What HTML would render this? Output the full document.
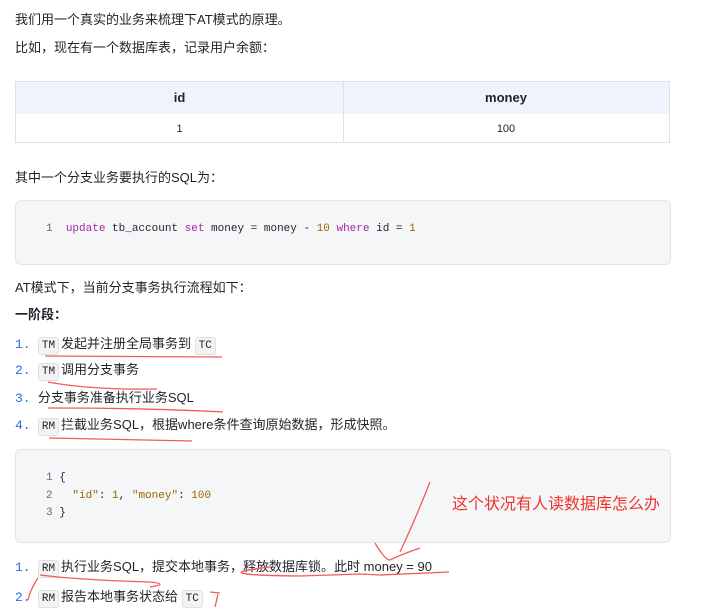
<!DOCTYPE html><html><head><meta charset="utf-8"><style>
body{margin:0;width:725px;height:607px;overflow:hidden;background:#fff;font-family:"Liberation Sans","Noto Sans CJK SC",sans-serif;font-size:13px;color:#1f2329;position:relative}
.a{position:absolute;white-space:nowrap;line-height:18px}
.tb{position:absolute;left:15px;top:81px;width:655px;height:62px;border:1px solid #dee0e3;box-sizing:border-box}
.code{position:absolute;left:15px;width:656px;background:#f5f6f7;border:1px solid #e4e5e7;border-radius:6px;box-sizing:border-box}
.m{font-family:"Liberation Mono","DejaVu Sans Mono",monospace;font-size:11px}
.k{color:#a626a4}.n{color:#986801}.s{color:#986801}
.num{color:#2f6be6;font-family:"Liberation Mono",monospace}
.t{display:inline-block;border:1px solid #dee0e3;background:#f2f3f5;border-radius:3px;padding:0 3px;font-family:"Liberation Mono",monospace;font-size:11px;line-height:16px;margin-right:2px}
</style></head><body>
<div class="a" style="left:15px;top:11px">我们用一个真实的业务来梳理下AT模式的原理。</div>
<div class="a" style="left:15px;top:39px">比如，现在有一个数据库表，记录用户余额：</div>
<div class="tb">
<div style="position:absolute;left:0;top:0;width:653px;height:32px;background:#eff3fd"></div>
<div style="position:absolute;left:327px;top:0;width:1px;height:60px;background:#dee0e3"></div>
<div class="a" style="left:0;width:327px;text-align:center;top:7px;font-weight:bold">id</div>
<div class="a" style="left:327px;width:326px;text-align:center;top:7px;font-weight:bold">money</div>
<div class="a" style="left:0;width:327px;text-align:center;top:38px;font-size:11px">1</div>
<div class="a" style="left:327px;width:326px;text-align:center;top:38px;font-size:11px">100</div>
</div>
<div class="a" style="left:15px;top:169px">其中一个分支业务要执行的SQL为：</div>
<div class="code" style="top:200px;height:65px">
<div class="a m" style="left:30px;top:19px"><span style="color:#646a73">1</span>&nbsp;&nbsp;<span class="k">update</span> tb_account <span class="k">set</span> money = money - <span class="n">10</span> <span class="k">where</span> id = <span class="n">1</span></div>
</div>
<div class="a" style="left:15px;top:279px">AT模式下，当前分支事务执行流程如下：</div>
<div class="a" style="left:15px;top:306px;font-weight:bold">一阶段：</div>
<div class="a" style="left:15px;top:335px"><span class="num">1.</span>&nbsp;&nbsp;<span class="t">TM</span>发起并注册全局事务到 <span class="t">TC</span></div>
<div class="a" style="left:15px;top:361px"><span class="num">2.</span>&nbsp;&nbsp;<span class="t">TM</span>调用分支事务</div>
<div class="a" style="left:15px;top:389px"><span class="num">3.</span>&nbsp;&nbsp;分支事务准备执行业务SQL</div>
<div class="a" style="left:15px;top:416px"><span class="num">4.</span>&nbsp;&nbsp;<span class="t">RM</span>拦截业务SQL，根据where条件查询原始数据，形成快照。</div>
<div class="code" style="top:449px;height:94px">
<div class="a m" style="left:30px;top:20px;line-height:17.5px;color:#1f2329"><span style="color:#646a73">1</span> {<br><span style="color:#646a73">2</span> &nbsp; <span class="s">"id"</span>: <span class="n">1</span>, <span class="s">"money"</span>: <span class="n">100</span><br><span style="color:#646a73">3</span> }</div>
</div>
<div class="a" style="left:452px;top:496px;color:#f0322a;font-size:16px">这个状况有人读数据库怎么办</div>
<div class="a" style="left:15px;top:558px"><span class="num">1.</span>&nbsp;&nbsp;<span class="t">RM</span>执行业务SQL，提交本地事务，释放数据库锁。此时 money = 90</div>
<div class="a" style="left:15px;top:588px"><span class="num">2.</span>&nbsp;&nbsp;<span class="t">RM</span>报告本地事务状态给 <span class="t">TC</span></div>
<svg style="position:absolute;left:0;top:0" width="725" height="607" fill="none" stroke="#f25a5a" stroke-width="1.3">
<path d="M45 356 L222 357"/>
<path d="M48 382 Q90 390 157 389"/>
<path d="M48 408 Q150 408 223 412"/>
<path d="M49 438 Q150 440 192 441"/>
<path d="M430 482 Q415 520 400 552 M375 543 Q385 560 390 560 Q400 555 420 548 M270 567 Q200 575 300 576 L360 574 L380 575 L449 572"/>
<path d="M38 578 Q30 590 28 600 M40 575 Q80 580 150 582 Q170 584 150 587 M210 592 L220 593 M218 594 L215 607"/>
</svg>
</body></html>
